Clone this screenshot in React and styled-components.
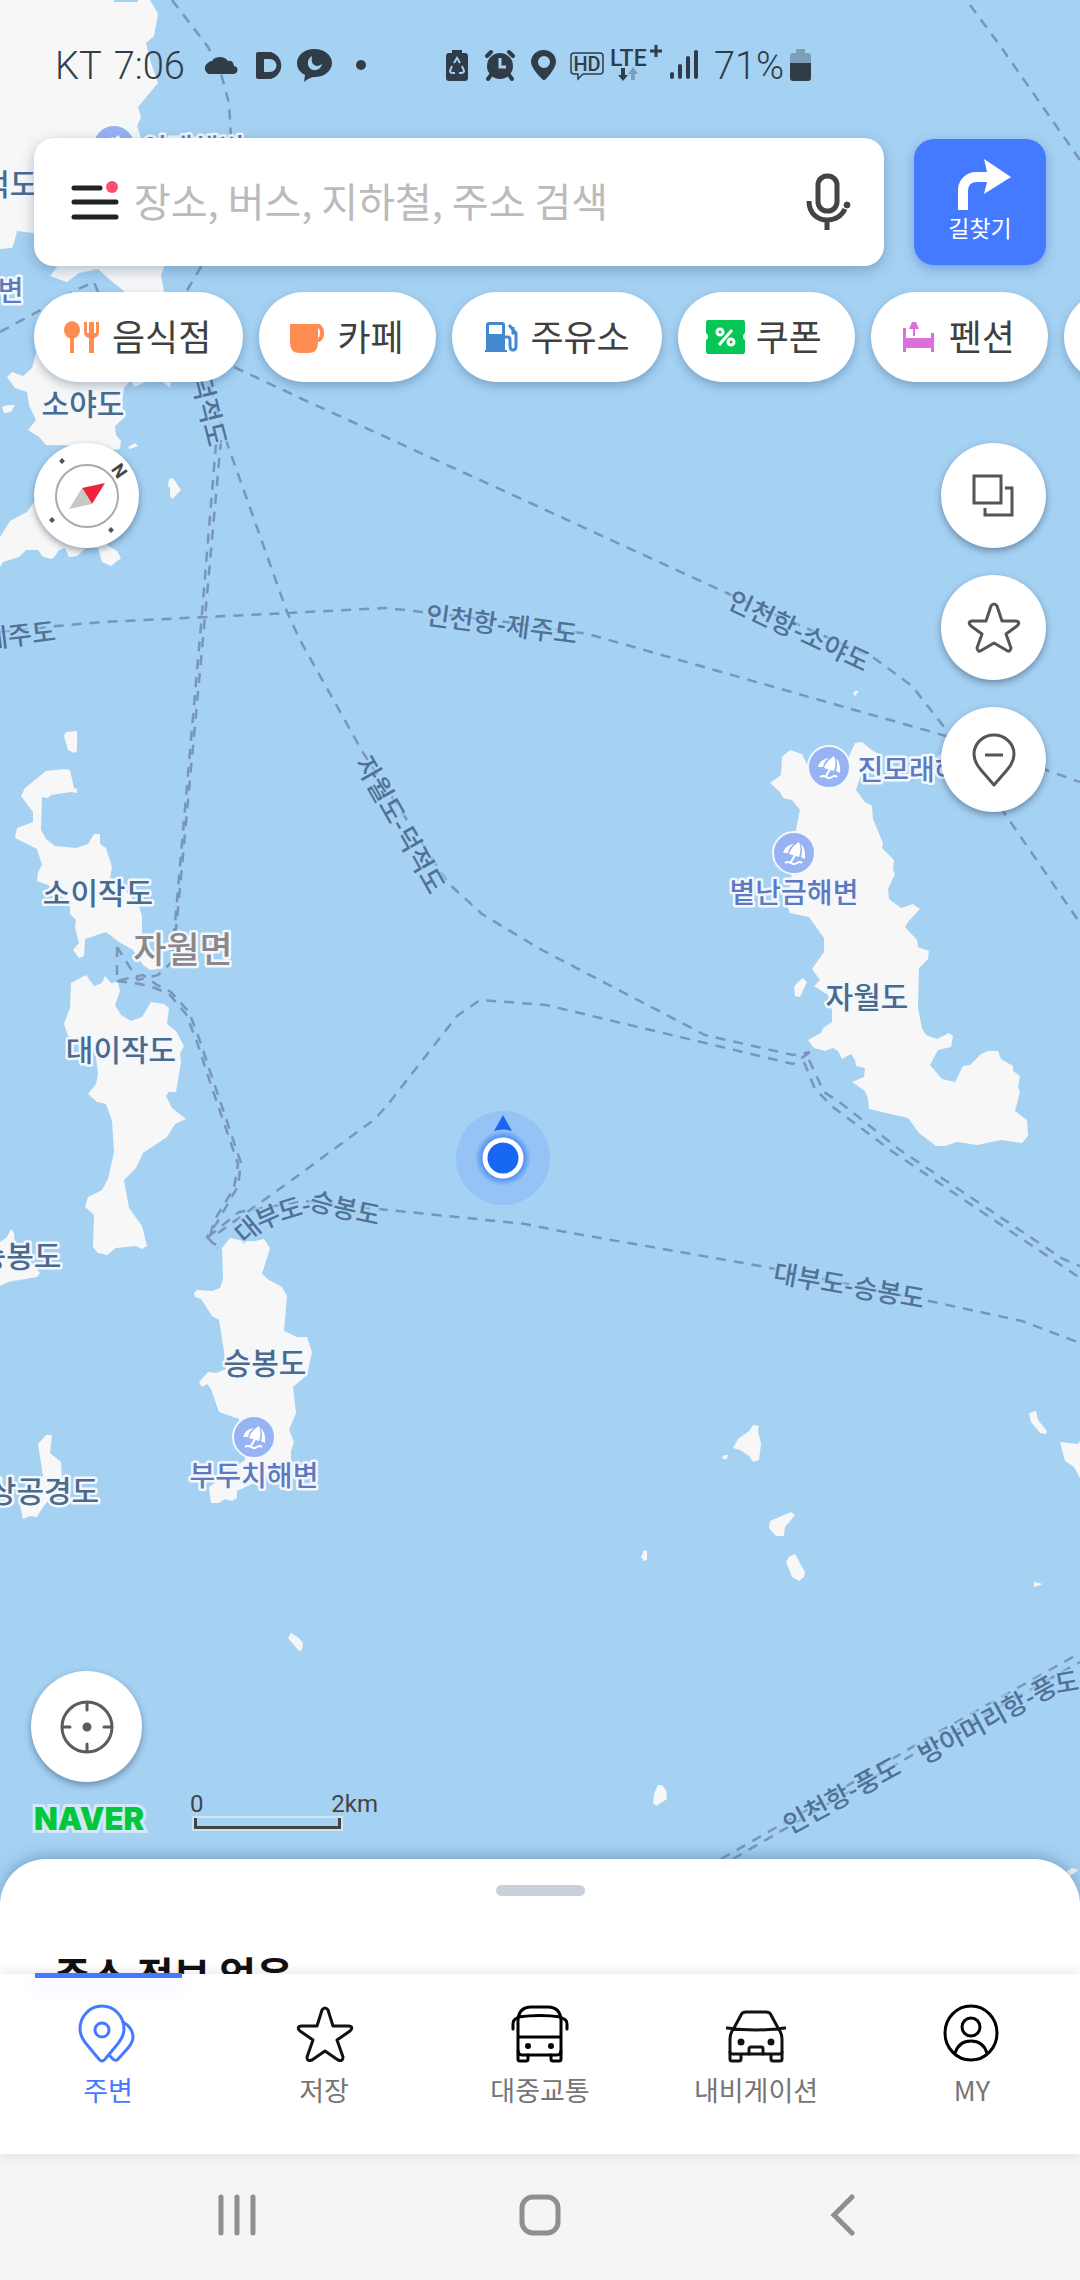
import React from 'react'
import styled, { createGlobalStyle } from 'styled-components'

const GlobalStyle = createGlobalStyle`
  * {
    box-sizing: border-box;
  }
  body {
    margin: 0;
    background: #a5d1f3;
    font-family: "Noto Sans CJK KR", "Noto Sans CJK SC", sans-serif;
  }
  button, input {
    font-family: inherit;
  }
`;

const Screen = styled.div`
  display: flex;
  flex-direction: column;
  min-height: 100vh;
  overflow: hidden;
`;

const MapArea = styled.main`
  position: relative;
  flex: 1;
  display: flex;
  flex-direction: column;
  min-height: 1400px;
  background: #a5d1f3;
`;

// the map lies under every control
const MapCanvas = styled.svg`
  position: absolute;
  top: 0;
  left: 0;
  width: 100%;
  height: 100%;
`;

const Overlay = styled.div`
  position: relative;
  flex: 1;
  display: flex;
  flex-direction: column;
`;

const StatusBar = styled.header`
  display: flex;
  align-items: center;
  gap: 6px;
  height: 138px;
  padding: 0 55px 6px;
  font-family: Roboto, sans-serif;
  font-size: 38px;
  font-weight: 300;
  line-height: 44px;
  color: #303d48;
`;

const Carrier = styled.span`
  margin-right: 6px;
`;

const Clock = styled.time`
  margin-right: 12px;
`;

const StatusGroup = styled.div`
  display: flex;
  align-items: center;
  gap: 6px;
  margin-left: ${props => props.$push ? "74px" : "0"};
`;

const StatusIcon = styled.svg`
  display: block;
  height: 40px;
  width: ${props => props.$w}px;
  overflow: visible;
`;

const TopRow = styled.div`
  display: flex;
  gap: 30px;
  padding: 0 34px;
`;

const SearchBar = styled.form`
  flex: 1;
  display: flex;
  align-items: center;
  height: 128px;
  padding: 0 30px 0 34px;
  border-radius: 20px;
  background: white;
  box-shadow: 0 4px 14px rgba(40, 80, 120, 0.35);
`;

const PlainButton = styled.button`
  display: block;
  padding: 0;
  border: 0;
  background: none;
  line-height: 0;
`;

const SearchInput = styled.input`
  flex: 1;
  min-width: 0;
  margin-left: 10px;
  padding: 0 0 4px;
  border: 0;
  outline: 0;
  background: none;
  font-size: 40px;
  line-height: 60px;
  color: #222;
  &::placeholder {
    color: #bbb;
    opacity: 1;
  }
`;

const RouteButton = styled.button`
  display: flex;
  flex-direction: column;
  align-items: center;
  width: 132px;
  height: 126px;
  margin-top: 1px;
  padding: 19px 0 0;
  border: 0;
  border-radius: 20px;
  background: #447aff;
  box-shadow: 0 4px 12px rgba(50, 90, 180, 0.4);
  color: white;
  font-size: 23px;
  line-height: 34px;
`;

const Chips = styled.nav`
  display: flex;
  gap: 16px;
  margin-top: 14px;
  padding: 12px 0 20px 34px;
  overflow: hidden;
`;

const Chip = styled.button`
  flex: none;
  display: flex;
  align-items: center;
  gap: 12px;
  min-width: 177px;
  height: 90px;
  padding: 0 32px 0 30px;
  border: 0;
  border-radius: 45px;
  background: white;
  box-shadow: 0 4px 10px rgba(40, 80, 120, 0.35);
  font-size: 36px;
  line-height: 50px;
  color: #404040;
`;

const ChipIcon = styled.svg`
  width: 36px;
  height: 36px;
  overflow: visible;
`;

const ChipLabel = styled.span`
  padding-bottom: 4px;
`;

const ControlRow = styled.div`
  display: flex;
  justify-content: space-between;
  align-items: flex-start;
  margin-top: 41px;
  padding: 0 34px;
`;

const ToolStack = styled.div`
  display: flex;
  flex-direction: column;
  gap: 27px;
`;

const RoundButton = styled.button`
  display: flex;
  align-items: center;
  justify-content: center;
  width: ${props => props.$size || 105}px;
  height: ${props => props.$size || 105}px;
  padding: 0;
  border: 0;
  border-radius: 50%;
  background: white;
  box-shadow: 0 3px 7px rgba(30, 50, 80, 0.45);
`;

const BottomLeft = styled.div`
  margin-top: auto;
  padding: 0 31px 25px;
`;

const CreditRow = styled.div`
  display: flex;
  align-items: flex-end;
  gap: 38px;
  margin-top: 10px;
`;

const Brand = styled.a`
  width: 121px;
  padding-left: 3px;
  font-family: Inter, sans-serif;
  font-size: 31px;
  font-weight: 900;
  line-height: 30px;
  color: #00c73c;
  text-decoration: none;
  -webkit-text-stroke: 6px #d3e8f9;
  paint-order: stroke fill;
`;

const Scale = styled.div`
  width: 188px;
  padding-bottom: 5px;
  font-family: Roboto, sans-serif;
  font-size: 24px;
  line-height: 24px;
  color: #444;
`;

const ScaleLabels = styled.div`
  display: flex;
  justify-content: space-between;
`;

const ScaleLine = styled.div`
  width: 147px;
  height: 11px;
  margin: 2px 0 0 4px;
  border: 3px solid #444;
  border-top: 0;
  outline: 2px solid rgba(220, 236, 250, 0.7);
`;

const Sheet = styled.section`
  height: 115px;
  padding-top: 26px;
  border-radius: 46px 46px 0 0;
  background: white;
  box-shadow: 0 -3px 14px rgba(40, 80, 120, 0.35);
  overflow: hidden;
`;

const SheetHandle = styled.div`
  width: 89px;
  height: 11px;
  margin: 0 auto;
  border-radius: 6px;
  background: #c9cfdb;
`;

const SheetTitle = styled.h2`
  margin: 48px 54px 0;
  font-size: 40px;
  font-weight: 700;
  line-height: 60px;
  color: #111;
`;

const TabBar = styled.nav`
  position: relative;
  display: grid;
  grid-template-columns: repeat(5, 1fr);
  height: 180px;
  background: white;
  box-shadow: 0 0 14px rgba(0, 0, 0, 0.12);
`;

const Tab = styled.button`
  position: relative;
  display: flex;
  flex-direction: column;
  align-items: center;
  gap: 6px;
  padding: 30px 0 0;
  border: 0;
  background: none;
  font-size: 27px;
  line-height: 40px;
  color: ${props => props.$active ? "#447aff" : "#757575"};
`;

const TabMark = styled.span`
  position: absolute;
  top: -1px;
  left: 35px;
  width: 147px;
  height: 5px;
  background: #447aff;
  box-shadow: 0 10px 16px rgba(68, 122, 255, 0.12);
`;

const SystemNav = styled.footer`
  display: grid;
  grid-template-columns: repeat(3, 1fr);
  align-items: center;
  justify-items: center;
  height: 126px;
  padding: 0 86px 4px;
  background: #f5f5f5;
`;

const LAND = [
  "M0 0H114V2H138V0H150L158 14L154 36L146 43L151 63L158 83L138 107L141 117L137 126L141 138L165 190L164 267L161 275L164 292L171 330L171 380L170 388L161 380L146 382L134 387L131 380L124 388L122 403L124 418L115 426L116 435L121 441L120 449L100 452L64 445H46L39 437L28 430L36 420L29 405L27 392L15 388L7 377L12 372L23 376L32 368L36 353L60 330L125 292L109 279L98 269L79 273L67 282L50 276L57 267L33 233L17 231L14 243L12 248L0 249Z",
  "M60 488L34 502L27 512L10 521L0 537V567L3 562L19 557L26 550H38L43 557L52 559L55 556L59 550L65 548L69 557L77 556L86 548H98L102 562L111 566L121 558L117 551L107 545L110 500Z",
  "M2 407L8 405H15L11 412L4 413Z",
  "M128 447L135 443L138 446L130 449Z",
  "M169 479L173 478L181 490L172 499L170 496V487H168Z",
  "M64 736L66 732L77 731V751L74 753L68 750Z",
  "M21 796L25 788L46 771L64 769L70 770L74 788L77 789V793L71 792L51 795L48 798L42 797L41 830L46 839L55 846L76 848L88 844L94 834H100V844L106 848L112 867L110 878L125 890L139 906L142 916V935L157 969L150 970L143 965L133 950L119 942L106 932L85 939L84 956L79 958L73 950L79 943L77 935L75 927L76 920L70 914V904L48 885L37 881L38 872L42 865L37 849L15 838L17 828L33 822V812Z",
  "M71 983L86 975L94 986L102 983L105 976L111 983L118 982L120 991L115 1005L121 1015L131 1021L142 1017L151 1002L164 1004L169 1008L167 1024L176 1031L184 1046L180 1054L181 1062L176 1092H169L166 1096L172 1108L186 1119L175 1124L167 1137L143 1153L136 1168L124 1180L129 1208L142 1226L147 1246L142 1249L136 1246L116 1248L107 1255L98 1253L93 1247L94 1215L85 1207L88 1197L102 1190L108 1179L114 1152L112 1121L106 1104L97 1102L88 1094L96 1084L98 1074L95 1050L68 1036L64 1024L70 1008Z",
  "M0 1242L7 1237L11 1229L14 1233L15 1245L40 1273L37 1277L8 1282L0 1286Z",
  "M38 1444L46 1435H52L50 1453L61 1462L62 1478L54 1494L43 1507L37 1517L30 1516L23 1519L20 1505L43 1476Z",
  "M222 1248L230 1238L246 1241H255L264 1239L270 1248L262 1274L269 1280L282 1287L287 1296L284 1331L297 1337H307L312 1352L307 1375L293 1387L296 1413L289 1430L294 1442L291 1451V1463L260 1480L237 1491V1498L232 1501L225 1499L219 1503H211L209 1487L245 1460L239 1419L219 1412L211 1389L207 1384L202 1387L199 1382L208 1372L216 1373L226 1369L224 1351L219 1320L212 1316L201 1299L195 1297L194 1293L197 1290L212 1291L220 1288L223 1279Z",
  "M782 757L790 750L802 754L812 775L840 775L851 752L855 743L862 742L869 748L881 756L876 768L862 772L856 790L865 802L872 806L873 819L883 843L882 848L894 860L893 870L895 874L888 889L889 899L901 908L913 904L920 909L908 922L905 927L917 940L918 947L929 951L928 959L919 968L918 1008L922 1028L926 1035L937 1039L949 1033L953 1036L951 1047L938 1050L930 1065L942 1079L955 1082L963 1066L970 1065L981 1054L988 1051H998L1001 1059L1013 1066V1071L1020 1076L1018 1087L1020 1092L1015 1111L1027 1120L1028 1136L1022 1143L1001 1140L977 1145L957 1142L945 1146H936L919 1133L908 1118L869 1109L868 1099L865 1091L852 1082L864 1077L865 1068L856 1066L855 1060L851 1054L842 1059L838 1051L833 1048L825 1051L814 1048L808 1040L821 1033L823 1028L832 1022V1011L828 995L814 986L820 980L812 969L824 952V938L809 917L790 913L788 908L792 870L796 829L800 810L792 800L783 798L780 792L770 783L781 775Z",
  "M794 987L798 982L803 978L807 982L800 997L795 996Z",
  "M853 694L855 691H859L855 696Z",
  "M733 1448L738 1439L749 1431L753 1425L759 1426L758 1431L761 1444L759 1460L753 1462L749 1456L740 1450Z",
  "M722 1457L725 1455H728L727 1459H723Z",
  "M769 1528L770 1521L791 1512L795 1515L785 1527L784 1536H776Z",
  "M786 1562L789 1557L795 1554L805 1572L804 1577L799 1581L792 1577Z",
  "M641 1557L644 1550L647 1551V1560L644 1561Z",
  "M1034 1582L1043 1584L1034 1587Z",
  "M1029 1413L1036 1411L1038 1420L1047 1431L1046 1434L1040 1433L1031 1422Z",
  "M1060 1442L1078 1444L1080 1441V1478L1074 1467L1065 1461Z",
  "M654 1794L658 1785H662L666 1790L667 1799L656 1806L653 1803Z",
  "M1063 1874L1072 1868L1078 1870L1070 1876Z",
  "M288 1638L291 1633L299 1638L303 1643L302 1650L299 1651Z",
]

const FERRIES = [
  "M172 0L208 47L220 70L229 103L231 138L228 200L201 267L186 292",
  "M0 332L37 312L76 290L94 282L98 292",
  "M234 367L300 398L537 506L729 594L874 658L912 686L948 732L1005 814L1080 923",
  "M0 632L57 626L103 622L288 613L386 608L422 612L506 622L588 634L946 736L1046 770L1080 782",
  "M221 440L205 617L177 920L172 962L158 975L138 980L117 947",
  "M216 444L201 625L174 935",
  "M205 370L227 443L287 612L300 640L362 751L448 883L482 914L540 949L705 1035L793 1055L810 1052",
  "M218 1233L243 1215L296 1177L375 1119L389 1103L457 1016L480 1000L546 1005L793 1064L810 1052",
  "M208 1237L239 1212L304 1201L379 1209L525 1224L560 1231L766 1267L929 1301L1022 1321L1080 1343",
  "M117 947V981L143 975L157 985L171 992L189 1012L200 1041L214 1083L241 1163L238 1186L218 1221L207 1237L218 1248",
  "M117 981L140 984L155 988L169 994L186 1014L197 1042L211 1085L238 1164L234 1188L214 1221L209 1240L216 1245",
  "M804 1062L815 1089L833 1107L893 1152L1080 1278",
  "M809 1060L824 1092L842 1104L900 1150L1063 1259L1080 1266",
  "M970 5L1001 47L1080 160",
  "M721 1859L798 1815L919 1743L1080 1653",
  "M733 1859L800 1820L921 1750L1080 1662",
]

const PLACES = [
  { x: 83, y: 404, text: "소야도" },
  { x: 98, y: 893, text: "소이작도" },
  { x: 121, y: 1050, text: "대이작도" },
  { x: 867, y: 997, text: "자월도" },
  { x: 265, y: 1363, text: "승봉도" },
  { x: 20, y: 1256, text: "승봉도" },
  { x: 44, y: 1491, text: "상공경도" },
  { x: -4, y: 184, text: "덕적도" },
  { x: 183, y: 950, text: "자월면", kind: "town" },
  { x: 254, y: 1476, text: "부두치해변", kind: "beach" },
  { x: 794, y: 893, text: "볕난금해변", kind: "beach" },
  { x: 922, y: 770, text: "진모래해변", kind: "beach" },
  { x: 193, y: 149, text: "이개해변", kind: "beach" },
  { x: -41, y: 291, text: "떼뿌루해변", kind: "beach" },
]

const PLACE_STYLES = {
  island: { size: 30, weight: 500, color: "#4b6a8c" },
  town: { size: 36, weight: 500, color: "#8d878b" },
  beach: { size: 28, weight: 500, color: "#6079be" },
}

// labels that follow a ferry line
const ROUTE_LABELS = [
  { d: "M-16 639L100 625", text: "제주도" },
  { d: "M426 614L600 637", text: "인천항-제주도" },
  { d: "M730 598L881 669", text: "인천항-소야도" },
  { d: "M363 758L453 916", text: "자월도-덕적도" },
  { d: "M201 376L222 460", text: "덕적도" },
  { d: "M238 1237L256 1222Q290 1205 322 1202Q350 1210 400 1219", text: "대부도-승봉도" },
  { d: "M774 1272L950 1303", text: "대부도-승봉도" },
  { d: "M785 1826L920 1752", text: "인천항-풍도" },
  { d: "M920 1756L1045 1688Q1062 1680 1100 1679", text: "방아머리항-풍도" },
]

const BEACHES = [[829, 767], [794, 853], [254, 1437], [114, 146]]

function BeachPin({ x, y }) {
  return (
    <g transform={`translate(${x} ${y})`}>
      <circle r="21" fill="#97b3f3" stroke="#f4f8ff" strokeWidth="2" />
      <path d="M-11 0Q-9 -8 0 -9Q-5 -6 -6 0Z M-5 1Q-3 -6 5 -11Q8 -4 5 4Z M7 4Q9 -3 7 -9Q12 -4 11 6Z" fill="white" />
      <path d="M1 2L-3 9M-9 10Q-6 8 -3 10T3 10T8 10" fill="none" stroke="white" strokeWidth="2" />
    </g>
  )
}

function IslandMap() {
  return (
    <MapCanvas viewBox="0 0 1080 1974" preserveAspectRatio="xMinYMin slice" role="img" aria-label="지도">
      <defs>
        <radialGradient id="glow">
          <stop offset="65%" stopColor="#1767f2" stopOpacity="0.7" />
          <stop offset="100%" stopColor="#1767f2" stopOpacity="0" />
        </radialGradient>
        {ROUTE_LABELS.map((label, i) => <path key={i} id={"route" + i} d={label.d} />)}
      </defs>
      <g fill="#f7f7f7">
        {LAND.map(d => <path key={d} d={d} />)}
      </g>
      <g fill="none" stroke="#7896b9" strokeWidth="2.500" strokeDasharray="10 8">
        {FERRIES.map(d => <path key={d} d={d} />)}
      </g>
      <g fontSize="26" fontWeight="500" fill="#4f7396" stroke="#a9d3f4" strokeWidth="5" strokeOpacity="0.6" paintOrder="stroke">
        {ROUTE_LABELS.map((label, i) => (
          <text key={i} dy="10"><textPath href={"#route" + i}>{label.text}</textPath></text>
        ))}
      </g>
      {BEACHES.map(([x, y]) => <BeachPin key={y} x={x} y={y} />)}
      {PLACES.map(place => {
        const look = PLACE_STYLES[place.kind || "island"]
        return (
          <text key={place.text + place.y} x={place.x} y={place.y + Math.round(look.size * 0.37)} textAnchor="middle"
            fontSize={look.size} fontWeight={look.weight} fill={look.color}
            stroke="#f2f8fe" strokeWidth="5" strokeLinejoin="round" paintOrder="stroke">
            {place.text}
          </text>
        )
      })}
      <circle cx="503" cy="1158" r="47" fill="#447aff" fillOpacity="0.16" />
      <circle cx="503" cy="1158" r="28" fill="url(#glow)" />
      <circle cx="503" cy="1158" r="18" fill="#1767f2" stroke="white" strokeWidth="5" />
      <path d="M494 1131Q503 1128 512 1131L503 1115Z" fill="#1767f2" />
    </MapCanvas>
  )
}

function PhoneStatus() {
  return (
    <StatusBar>
      <Carrier>KT</Carrier>
      <Clock>7:06</Clock>
      <StatusGroup>
        <StatusIcon $w={47} viewBox="0 0 47 40" fill="#303d48">
          <path d="M6 28A6 6 0 0 1 5 17Q6 15 9 15A10 10 0 0 1 25 15Q30 14 31 20Q36 21 34 26Q33 28 30 28Z" />
        </StatusIcon>
        <StatusIcon $w={35} viewBox="0 0 35 40" fill="#303d48">
          <path fillRule="evenodd" d="M2 6H15A14 14 0 0 1 15 33H2Q0 33 0 31V8Q0 6 2 6ZM8 13V26H14A6.500 6.500 0 0 0 14 13Z" />
        </StatusIcon>
        <StatusIcon $w={53} viewBox="0 0 53 40" fill="#303d48">
          <path fillRule="evenodd" d="M17 3C27 3 35 9 35 17S27 31 18 31Q13 31 7 36L8 29Q0 25 0 17C0 9 8 3 17 3ZM15 10Q10 13 11 19Q13 25 19 24Q24 23 25 18Q20 22 16 18Q14 15 15 10Z" />
        </StatusIcon>
        <StatusIcon $w={10} viewBox="0 0 10 40" fill="#303d48">
          <circle cx="5" cy="19" r="5" />
        </StatusIcon>
      </StatusGroup>
      <StatusGroup $push>
        <StatusIcon $w={33} viewBox="0 0 33 40" fill="#303d48">
          <path d="M6 4H16V7H19Q22 7 22 10V32Q22 35 19 35H3Q0 35 0 32V10Q0 7 3 7H6Z" />
          <path d="M8 17L11 12L14 17M16 20L18 25Q18 27 15 27H13M6 20L4 25Q4 27 7 27H9" fill="none" stroke="#a5d1f3" strokeWidth="2" />
        </StatusIcon>
        <StatusIcon $w={40} viewBox="0 0 40 40" fill="#303d48">
          <circle cx="15" cy="20" r="13" />
          <path d="M2 10L6 6M28 10L24 6M6 29L3 33M24 29L27 33" stroke="#303d48" strokeWidth="4" strokeLinecap="round" />
          <path d="M15 12V21H21" fill="none" stroke="#a5d1f3" strokeWidth="3" />
        </StatusIcon>
        <StatusIcon $w={32} viewBox="0 0 32 40" fill="#303d48">
          <path fillRule="evenodd" d="M13 4A12 12 0 0 1 25 16Q25 22 15 33Q13 35 11 33Q0 22 0 16A12 12 0 0 1 13 4ZM13 10A6 6 0 1 0 13 22A6 6 0 1 0 13 10Z" />
        </StatusIcon>
        <StatusIcon $w={36} viewBox="0 0 36 40">
          <path d="M5 7H31Q34 7 34 10V25Q34 28 31 28H14L9 33V28H5Q2 28 2 25V10Q2 7 5 7Z" fill="none" stroke="#303d48" strokeWidth="1.500" />
          <text x="18" y="25" textAnchor="middle" fontSize="20" fontWeight="500" fill="#303d48">HD</text>
        </StatusIcon>
        <StatusIcon $w={53} viewBox="0 0 53 40" fill="#303d48">
          <text x="-1" y="20" fontSize="23" fontWeight="500">LTE</text>
          <path d="M39 5H51M45 -1V11" stroke="#303d48" strokeWidth="3" />
          <path d="M10 22H14V29H17L12 35L7 29H10Z" />
          <path d="M20 34H24V28H27L22 21L17 28H20Z" fill="#7d9eb8" />
        </StatusIcon>
        <StatusIcon $w={38} viewBox="0 0 38 40" stroke="#303d48" strokeWidth="4" strokeLinecap="round">
          <path d="M2 28V31M10 20V31M18 12V31M26 6V31" />
        </StatusIcon>
        <span>71%</span>
        <StatusIcon $w={21} viewBox="0 0 21 40">
          <path d="M6 3H15V7H18Q21 7 21 10V18H0V10Q0 7 3 7H6Z" fill="#7d9fb9" />
          <path d="M0 17H21V32Q21 35 18 35H3Q0 35 0 32Z" fill="#303d48" />
        </StatusIcon>
      </StatusGroup>
    </StatusBar>
  )
}

const CHIPS = [
  {
    name: "음식점",
    icon: <g fill="#ff8c50">
      <ellipse cx="8" cy="11" rx="8" ry="9" />
      <path d="M6 16H10V34H6ZM20 3H23V14H25V3H30V14H32V3H35V13Q35 18 30 19V34H25V19Q20 18 20 13Z" />
    </g>
  },
  {
    name: "카페",
    icon: <g>
      <path d="M1 5H29V24Q29 34 19 34H11Q1 34 1 24Z" fill="#ff8c50" />
      <path d="M28 7H30A6 8 0 0 1 30 21H28" fill="none" stroke="#ff8c50" strokeWidth="4" />
    </g>
  },
  {
    name: "주유소",
    icon: <g>
      <path fillRule="evenodd" d="M7 3H20Q23 3 23 6V31H25V33H3V31H4V6Q4 3 7 3ZM7 6V15H20V6Z" fill="#4488cf" />
      <path d="M23 18H26Q28 18 28 21V27Q28 31 31 31T34 27V14L27 6M34 14H31V8" fill="none" stroke="#4488cf" strokeWidth="3" />
    </g>
  },
  {
    name: "쿠폰",
    icon: <g>
      <path d="M0 1H35Q37 1 37 4V14A4 4 0 0 0 37 21V32Q37 35 35 35H0Q-2 35 -2 32V21A4 4 0 0 0 -2 14V4Q-2 1 0 1Z" fill="#06c755" />
      <g fill="none" stroke="white" strokeWidth="3">
        <circle cx="12" cy="13" r="3" />
        <circle cx="23" cy="23" r="3" />
        <path d="M24 11L11 26" />
      </g>
    </g>
  },
  {
    name: "펜션",
    icon: <g fill="#db6fdb">
      <path d="M2 9H5V19H30V14H33V33H30V29H5V33H2Z" />
      <path d="M11 3H15L18 10H14V17H12V10H8Z" />
    </g>
  },
]

const TABS = [
  {
    name: "주변",
    icon: <g stroke="#447aff">
      <path d="M24 57Q22 57 20 54L10 42Q2 33 2 25A22 23 0 0 1 46 25Q46 33 38 42L28 54Q26 57 24 57Z" />
      <circle cx="24" cy="26" r="7" />
      <path d="M45 18Q55 24 55 33Q55 38 50 44L41 54Q38 58 35 55L31 51" />
    </g>
  },
  {
    name: "저장",
    icon: <path d="M28 6Q31 2 34 6L39 22H55Q60 23 56 27L43 36L49 53Q49 58 44 56L31 47L18 56Q13 58 13 53L19 36L6 27Q2 23 7 22H23Z" />
  },
  {
    name: "대중교통",
    icon: <g stroke="#000">
      <path d="M8 46V16Q9 3 21 3H38Q50 3 51 16V46Q51 51 47 51H12Q8 51 8 46ZM8 33H51M8 13Q30 10 51 13" />
      <path d="M8 14Q3 15 3 20V25M51 14Q57 15 57 20V25M8 47V55Q8 57 10 57H16Q18 57 18 55V51M51 47V55Q51 57 49 57H43Q41 57 41 55V51" />
      <circle cx="18" cy="42" r="2" fill="#000" stroke="#000" strokeWidth="2" />
      <circle cx="41" cy="42" r="2" fill="#000" stroke="#000" strokeWidth="2" />
    </g>
  },
  {
    name: "내비게이션",
    icon: <g>
      <path d="M8 24L15 11Q16 8 20 8H40Q44 8 45 11L52 24M1 24Q30 28 59 24M8 24Q4 29 4 35V48Q4 50 7 50H53Q56 50 56 48V35Q56 29 52 24" />
      <path d="M4 48V55Q4 57 6 57H13Q15 57 15 55V51M56 48V55Q56 57 54 57H47Q45 57 45 55V51M23 50V45Q23 43 25 43H35Q37 43 37 45V50" />
      <circle cx="15" cy="38" r="2" fill="#111" />
      <circle cx="45" cy="38" r="2" fill="#111" />
    </g>
  },
  {
    name: "MY",
    icon: <g stroke="#000">
      <ellipse cx="29" cy="29" rx="26" ry="27" />
      <circle cx="29" cy="23" r="9" />
      <path d="M13 49Q17 37 29 37T45 49" />
    </g>
  },
]

class App extends React.Component {
  constructor(props) {
    super(props);
    this.state = {
      tab: "주변",
      query: ""
    }
    this.selectTab = this.selectTab.bind(this)
  }

  selectTab(name) {
    this.setState({ tab: name })
  }

  render() {
    return (
      <Screen>
        <GlobalStyle />
        <MapArea>
          <IslandMap />
          <Overlay>
            <PhoneStatus />
            <TopRow>
              <SearchBar onSubmit={event => event.preventDefault()}>
                <PlainButton type="button" aria-label="메뉴">
                  <svg width="56" height="44" viewBox="0 0 56 44">
                    <path d="M6 8H32M6 22H48M6 37H48" stroke="#222" strokeWidth="5" strokeLinecap="round" />
                    <circle cx="44" cy="7" r="6" fill="#ff4d6d" />
                  </svg>
                </PlainButton>
                <SearchInput
                  type="text"
                  aria-label="검색"
                  placeholder="장소, 버스, 지하철, 주소 검색"
                  value={this.state.query}
                  onChange={event => this.setState({ query: event.target.value })}
                />
                <PlainButton type="button" aria-label="음성 검색">
                  <svg width="50" height="60" viewBox="0 0 50 60" fill="none" stroke="#444" strokeWidth="5">
                    <rect x="14" y="4" width="19" height="35" rx="9" />
                    <path d="M5 29C5 41 13 48 23 48C31 48 37 45 41 37M23 47V58" />
                    <circle cx="43" cy="33" r="3" fill="#444" strokeWidth="1" />
                  </svg>
                </PlainButton>
              </SearchBar>
              <RouteButton type="button">
                <svg width="62" height="52" viewBox="-8 0 62 52" fill="white">
                  <path d="M1 52V31A18 18 0 0 1 19 14H30L27 1L54 19L27 36L30 24H20Q11 24 11 33V52Z" />
                </svg>
                길찾기
              </RouteButton>
            </TopRow>
            <Chips>
              {CHIPS.map(chip => (
                <Chip key={chip.name} type="button">
                  <ChipIcon viewBox="0 0 36 36">{chip.icon}</ChipIcon>
                  <ChipLabel>{chip.name}</ChipLabel>
                </Chip>
              ))}
              <Chip type="button" aria-label="더보기" />
            </Chips>
            <ControlRow>
              <RoundButton type="button" aria-label="나침반">
                <svg width="105" height="105" viewBox="0 0 105 105">
                  <circle cx="53" cy="53" r="31" fill="none" stroke="#aaa" strokeWidth="2" />
                  <path d="M71 40L58 61L48 45Z" fill="#ef233c" />
                  <path d="M35 66L48 45L58 61Z" fill="#c8c8c8" />
                  <path d="M28 15L31 18L28 21L25 18ZM18 74L21 77L18 80L15 77ZM77 84L80 87L77 90L74 87Z" fill="#555" />
                  <text transform="translate(85 28) rotate(55)" y="6" textAnchor="middle" fontFamily="Roboto, sans-serif" fontSize="18" fontWeight="700" fill="#444">N</text>
                </svg>
              </RoundButton>
              <ToolStack>
                <RoundButton type="button" aria-label="지도 유형">
                  <svg width="46" height="46" viewBox="0 0 46 46" fill="none" stroke="#555" strokeWidth="3">
                    <path d="M3 3H30V30H3ZM34 15H41V42H14V35" />
                  </svg>
                </RoundButton>
                <RoundButton type="button" aria-label="즐겨찾기">
                  <svg width="54" height="54" viewBox="0 0 54 54" fill="none" stroke="#555" strokeWidth="3" strokeLinejoin="round">
                    <path d="M24 5Q27 1 30 5L35 20H49Q54 21 50 25L39 33L44 47Q43 52 39 49L27 42L15 49Q11 52 10 47L15 33L4 25Q0 21 5 20H19Z" />
                  </svg>
                </RoundButton>
                <RoundButton type="button" aria-label="장소 표시">
                  <svg width="44" height="54" viewBox="0 0 44 54" fill="none" stroke="#555" strokeWidth="3" strokeLinejoin="round">
                    <path d="M22 52L9 37Q2 29 2 21A20 19 0 0 1 42 21Q42 29 35 37ZM13 22H31" />
                  </svg>
                </RoundButton>
              </ToolStack>
            </ControlRow>
            <BottomLeft>
              <RoundButton type="button" aria-label="현재 위치" $size={111}>
                <svg width="54" height="54" viewBox="0 0 54 54" fill="none" stroke="#5c5c5c" strokeWidth="3" strokeLinecap="round">
                  <circle cx="27" cy="27" r="25" />
                  <circle cx="27" cy="27" r="3" fill="#5c5c5c" />
                  <path d="M27 3V10M27 44V51M3 27H10M44 27H51" />
                </svg>
              </RoundButton>
              <CreditRow>
                <Brand href="#naver">NAVER</Brand>
                <Scale>
                  <ScaleLabels>
                    <span>0</span>
                    <span>2km</span>
                  </ScaleLabels>
                  <ScaleLine />
                </Scale>
              </CreditRow>
            </BottomLeft>
            <Sheet>
              <SheetHandle />
              <SheetTitle>주소 정보 없음</SheetTitle>
            </Sheet>
          </Overlay>
        </MapArea>
        <TabBar>
          {TABS.map(tab => (
            <Tab key={tab.name} type="button" $active={this.state.tab === tab.name} onClick={() => this.selectTab(tab.name)}>
              {this.state.tab === tab.name ? <TabMark /> : null}
              <svg width="60" height="60" viewBox="0 0 60 60" fill="none" stroke="#111" strokeWidth="3" strokeLinejoin="round" strokeLinecap="round">
                {tab.icon}
              </svg>
              {tab.name}
            </Tab>
          ))}
        </TabBar>
        <SystemNav>
          <PlainButton type="button" aria-label="최근 앱">
            <svg width="40" height="42" viewBox="0 0 40 42" stroke="#8f8f8f" strokeWidth="5" strokeLinecap="round">
              <path d="M4 3V39M20 3V39M36 3V39" />
            </svg>
          </PlainButton>
          <PlainButton type="button" aria-label="홈">
            <svg width="42" height="42" viewBox="0 0 42 42" fill="none" stroke="#8f8f8f" strokeWidth="5">
              <rect x="3" y="3" width="36" height="36" rx="11" />
            </svg>
          </PlainButton>
          <PlainButton type="button" aria-label="뒤로">
            <svg width="26" height="42" viewBox="0 0 26 42" fill="none" stroke="#8f8f8f" strokeWidth="5" strokeLinecap="round">
              <path d="M22 3L4 21L22 39" />
            </svg>
          </PlainButton>
        </SystemNav>
      </Screen>
    )
  }
}

export default App
